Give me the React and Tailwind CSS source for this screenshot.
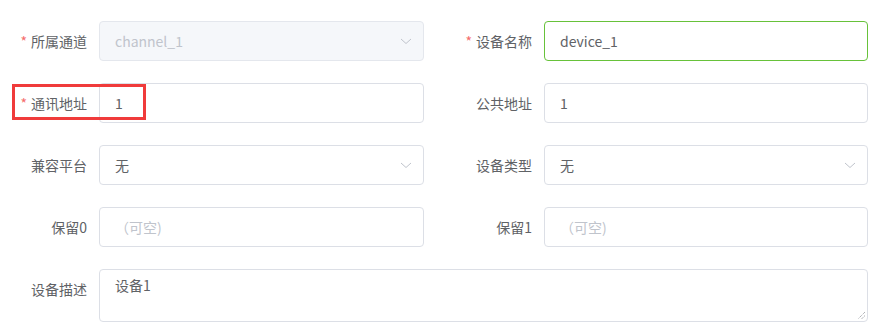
import React from "react";

const Chevron = () => (
  <svg width="14" height="14" viewBox="0 0 14 14" className="shrink-0">
    <path d="M2 5 L7 9.5 L12 5" fill="none" stroke="#c0c4cc" strokeWidth="1" />
  </svg>
);

const Label = ({ text, required, width }) => (
  <div className={`${width} shrink-0 pr-3 flex justify-end items-center text-[14px] text-[#606266]`}>
    {required && <span className="text-[#f56c6c] mr-1">*</span>}
    {text}
  </div>
);

const Field = ({ label, required, value, placeholder, select, disabled, focused, labelWidth }) => (
  <div className="flex h-10">
    <Label text={label} required={required} width={labelWidth} />
    <div
      className={`flex-1 flex items-center justify-between pl-[15px] ${select ? "pr-[10px]" : "pr-[15px]"} rounded border text-[14px] ${
        disabled ? "bg-[#f5f7fa] border-[#e4e7ed] text-[#c0c4cc]" : "bg-white"
      } ${focused ? "border-[#67c23a]" : disabled ? "" : "border-[#dcdfe6]"} ${
        value ? (disabled ? "" : "text-[#606266]") : "text-[#c0c4cc]"
      }`}
    >
      <span>{value || placeholder}</span>
      {select && <Chevron />}
    </div>
  </div>
);

const App = () => {
  return (
    <div
      className="relative w-[874px] h-[332px] bg-white pt-[21px]"
      style={{ fontFamily: '"Microsoft YaHei", "Noto Sans CJK SC", "Noto Sans", sans-serif' }}
    >
      <div className="grid grid-cols-[424px_424px] gap-x-[20px] gap-y-[22px]">
        <Field label="所属通道" required value="channel_1" select disabled labelWidth="w-[99px]" />
        <Field label="设备名称" required value="device_1" focused labelWidth="w-[100px]" />
        <Field label="通讯地址" required value="1" labelWidth="w-[99px]" />
        <Field label="公共地址" value="1" labelWidth="w-[100px]" />
        <Field label="兼容平台" value="无" select labelWidth="w-[99px]" />
        <Field label="设备类型" value="无" select labelWidth="w-[100px]" />
        <Field label="保留0" placeholder="（可空)" labelWidth="w-[99px]" />
        <Field label="保留1" placeholder="（可空)" labelWidth="w-[100px]" />
        <div className="col-span-2 flex h-[53px]">
          <div className="w-[99px] shrink-0 pr-3 pt-[10px] flex justify-end text-[14px] text-[#606266]">
            设备描述
          </div>
          <div className="relative flex-1 rounded border border-[#dcdfe6] px-[15px] py-[5px] text-[14px] text-[#606266]">
            设备1
            <svg width="9" height="9" viewBox="0 0 9 9" className="absolute right-[1px] bottom-[1px]">
              <path d="M8 1 L1 8 M8 4.5 L4.5 8" stroke="#909399" strokeWidth="1" strokeDasharray="1 1" />
            </svg>
          </div>
        </div>
      </div>
      {/* annotation highlight */}
      <div className="absolute left-[12px] top-[84px] w-[134px] h-[36px] border-[3px] border-[#f03b3b] pointer-events-none" />
    </div>
  );
};

export default App;
